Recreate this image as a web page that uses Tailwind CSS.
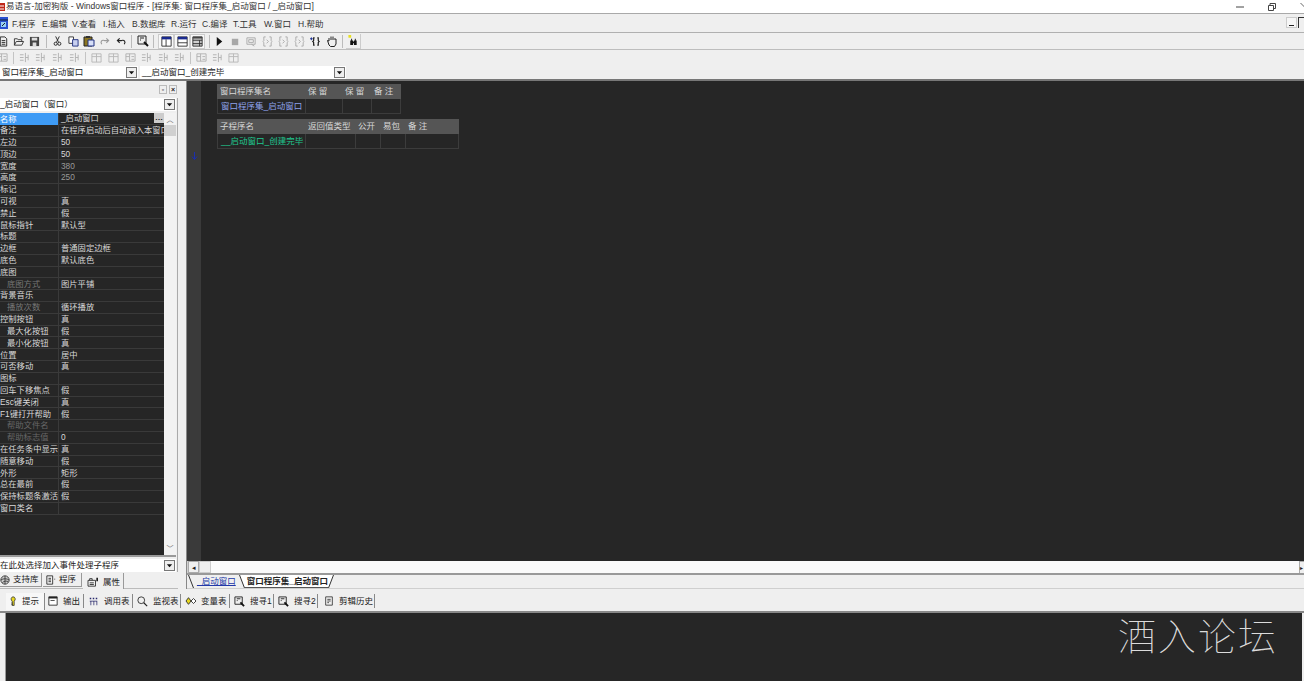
<!doctype html>
<html lang="zh-CN">

<head>
  <meta charset="UTF-8" />
  <title>易语言</title>
  <script src="https://cdn.jsdelivr.net/npm/@tailwindcss/browser@4"></script>
</head>

<body class="h-[681px] w-[1304px] overflow-hidden bg-[#efefef] text-[8.5px] leading-none text-[#222] font-['Liberation_Sans','Noto_Sans_CJK_SC',sans-serif]">
  <svg class="hidden">
    <symbol id="doc" viewBox="0 0 12 12"><path d="M2.500 1h5l2 2v8h-7zM4 5h4M4 7h4M4 9h4" fill="none" stroke="#222" /></symbol>
    <symbol id="open" viewBox="0 0 12 12"><path d="M1 10V3h3l1 1h4v2M1 10l2-4h8l-2 4zM8 1l2 1-1 1" fill="none" stroke="#333" /></symbol>
    <symbol id="save" viewBox="0 0 12 12"><path d="M1 1h10v10H1z" fill="#444" /><path d="M3 2h6v3H3zM4 7h4v4H4z" fill="#ddd" /></symbol>
    <symbol id="cut" viewBox="0 0 12 12"><path d="M4 1l3 6M8 1L5 7" fill="none" stroke="#222" /><circle cx="4" cy="9" r="1.700" fill="none" stroke="#222" /><circle cx="8" cy="9" r="1.700" fill="none" stroke="#222" /></symbol>
    <symbol id="copy" viewBox="0 0 12 12"><path d="M1 1h5v7H1z" fill="#fff" stroke="#333" /><path d="M5 4h6v7H5z" fill="#c8d0f0" stroke="#203080" /></symbol>
    <symbol id="paste" viewBox="0 0 12 12"><path d="M1 2h8v9H1z" fill="#8a7420" stroke="#222" /><path d="M3 1h4v2H3z" fill="#333" /><path d="M5 5h6v6H5z" fill="#d8e0f8" stroke="#203080" /></symbol>
    <symbol id="undo" viewBox="0 0 12 12"><path d="M9 9c2-3 0-5-3-4H2M4 2.500L1.500 5 4 7.500" fill="none" stroke="currentColor" stroke-width="1.200" /></symbol>
    <symbol id="find" viewBox="0 0 12 12"><path d="M1 1h8v8H1zM3 3h4M3 5h1" fill="none" stroke="#222" /><path d="M7 7l4 4" stroke="#111" stroke-width="2" /></symbol>
    <symbol id="panel1" viewBox="0 0 13 13"><path d="M1 1h11v11H1z" fill="#fff" stroke="#222" /><path d="M1 1h11v3H1z" fill="#1a2a90" /><path d="M6 4v8" stroke="#222" /></symbol>
    <symbol id="panel2" viewBox="0 0 13 13"><path d="M1 1h11v11H1z" fill="#fff" stroke="#222" /><path d="M1 1h11v3H1z" fill="#1a2a90" /><path d="M1 8h11" stroke="#222" /></symbol>
    <symbol id="panel3" viewBox="0 0 13 13"><path d="M1 1h11v11H1z" fill="#cfcfcf" stroke="#222" /><path d="M1 1h11v2H1z" fill="#444" /><path d="M1 5h11M1 9h11M9 5v7" stroke="#222" /></symbol>
    <symbol id="play" viewBox="0 0 12 12"><path d="M3 1l6 5-6 5z" fill="#111" /></symbol>
    <symbol id="stop" viewBox="0 0 12 12"><path d="M2 3h7v7H2z" fill="#a8a8a8" /></symbol>
    <symbol id="gbox" viewBox="0 0 12 12"><path d="M1 2h9v7H1zM3 4h5v3H3zM6 9l3 2" fill="none" stroke="#a8a8a8" /></symbol>
    <symbol id="brace" viewBox="0 0 12 12"><path d="M4 1H2v4L1 6l1 1v4h2M8 1h2v4l1 1-1 1v4H8M5 4l2 2-2 2" fill="none" stroke="#a8a8a8" /></symbol>
    <symbol id="brace2" viewBox="0 0 12 12"><path d="M5 2H4v3L3 6l1 1v3h1M8 2h1v3l1 1-1 1v3H8" fill="none" stroke="#111" stroke-width="1.200" /><path d="M0 3h3M1.500 1.500v3" stroke="#142a90" /></symbol>
    <symbol id="hand" viewBox="0 0 12 12"><path d="M3 6V3m2 2V1.500m2 3.500V1.500M9 5V3m-6 3L1.500 5.500 3 10l1.500 1.500h4L10 9V4" fill="none" stroke="#222" /></symbol>
    <symbol id="bino" viewBox="0 0 12 12"><path d="M1 0h3v3H1z" fill="#e8e020" /><path d="M3 6h3v5H3zM7 6h3v5H7zM4 4h1v2H4zM8 4h1v2H8zM6 7h1v2H6z" fill="#111" /></symbol>
    <symbol id="g1" viewBox="0 0 12 12"><path d="M1 2h10v8H1zM5 2v8M1 5h4M7 5h3M7 8h3" fill="none" stroke="#b0b0b0" /></symbol>
    <symbol id="g2" viewBox="0 0 12 12"><path d="M1 3h4M1 6h4M1 9h4M7 1v10M10 3v6M7 6h3" fill="none" stroke="#b0b0b0" /></symbol>
    <symbol id="g3" viewBox="0 0 12 12"><path d="M1 2h10v9H1zM1 5h10M6 2v9" fill="none" stroke="#b8b8b8" /></symbol>
    <symbol id="hint" viewBox="0 0 10 14"><path d="M5 1a3 3 0 0 1 1.500 5.500V12H4V6.500A3 3 0 0 1 5 1z" fill="#e8d820" stroke="#333" /><path d="M3 9h2M3 11h2" stroke="#333" /></symbol>
    <symbol id="output" viewBox="0 0 12 12"><path d="M1 1h10v10H1z" fill="#fff" stroke="#222" /><path d="M1 1h10v2H1zM3 5h5v1H3z" fill="#222" /></symbol>
    <symbol id="calls" viewBox="0 0 12 12"><path d="M1 1h2v2H1zM5 1h2v2H5zM9 1h2v2H9zM1 5h10v1H1zM2 6h1v5H2zM6 6h1v5H6zM10 6h1v5h-1z" fill="#28286c" /></symbol>
    <symbol id="lens" viewBox="0 0 13 13"><circle cx="5" cy="5" r="4" fill="none" stroke="#222" /><path d="M8 8l4 4" stroke="#222" stroke-width="1.400" /></symbol>
    <symbol id="vars" viewBox="0 0 14 12"><path d="M4 2l3 4-3 4-3-4z" fill="#e8d820" stroke="#222" /><path d="M10 3l3 3-3 3-3-3z" fill="#fff" stroke="#222" /></symbol>
    <symbol id="clip" viewBox="0 0 12 12"><path d="M2 1h8v10H2zM4 4h4M4 6h4M4 8h2" fill="none" stroke="#333" /></symbol>
    <symbol id="lib" viewBox="0 0 12 12"><circle cx="6" cy="6" r="5" fill="#ccc" stroke="#333" /><path d="M1 6c3-2 7-2 10 0M3 9c2-2 5-2 7-1M6 1v10" fill="none" stroke="#333" /></symbol>
    <symbol id="prog" viewBox="0 0 12 12"><path d="M1 1h7v10H1zM3 4h3M3 6h3M3 8h3M10 5h1" fill="none" stroke="#222" /></symbol>
    <symbol id="attr" viewBox="0 0 14 12"><path d="M1 4h9v7H1zM3 4V2h3v2M3 7h5M3 9h5" fill="none" stroke="#222" /><path d="M11 1h2v4h-2z" fill="#222" /></symbol>
    <symbol id="arrow" viewBox="0 0 8 8"><path d="M1 2.500h6L4 6z" fill="#111" /></symbol>
  </svg>

  <!-- Title bar -->
  <header class="flex h-[14px] items-center border-b border-[#a9a9a9] bg-white">
    <svg class="mr-[1px] h-[10px] w-[5px] shrink-0" viewBox="0 0 5 10"><path d="M0 1h5v8H0z" fill="#c02818" /><path d="M0 4h4M0 7h4" stroke="#fff" /></svg>
    <span class="whitespace-nowrap text-[8.500px] text-[#333]">易语言-加密狗版 - Windows窗口程序 - [程序集: 窗口程序集_启动窗口 / _启动窗口]</span>
    <div class="ml-auto flex items-center gap-[24px]">
      <svg class="h-[10px] w-[8px]" viewBox="0 0 8 10"><path d="M0 5h8" stroke="#444" /></svg>
      <svg class="h-[10px] w-[8px]" viewBox="0 0 8 10"><path d="M.5 3.500h5v5h-5zM2 3.500V1.500h5.500v5H5.500" fill="none" stroke="#444" /></svg>
      <svg class="h-[10px] w-[4px]" viewBox="0 0 4 10"><path d="M.5 1l5 5" stroke="#666" /></svg>
    </div>
  </header>

  <!-- Menu bar -->
  <nav class="flex h-[19px] items-center border-b border-[#b0b0b0] text-[8.500px] text-[#333]">
    <svg class="h-[14px] w-[8px] shrink-0" viewBox="0 0 8 14"><path d="M0 1h8v12H0z" fill="#2a50d0" /><path d="M0 4h8" stroke="#123" /><path d="M1 6h5v5H1z" fill="#9ad0f0" /><path d="M2 10l3-3" stroke="#123" /></svg>
    <div class="ml-[4px] flex gap-[7px] whitespace-nowrap pt-[3px]">
      <span class="w-[23px]">F.程序</span><span class="w-[23px]">E.编辑</span><span class="w-[24px]">V.查看</span><span class="w-[22px]">I.插入</span><span class="w-[32px]">B.数据库</span><span class="w-[24px]">R.运行</span><span class="w-[24px]">C.编译</span><span class="w-[24px]">T.工具</span><span class="w-[27px]">W.窗口</span><span class="w-[25px]">H.帮助</span>
    </div>
    <div class="ml-auto flex h-[12px] gap-[1px]">
      <span class="flex h-[11px] w-[11px] items-end justify-center border border-[#ccc] bg-[#f6f6f6] pb-px"><span class="h-px w-[5px] bg-[#222]"></span></span>
      <span class="h-[11px] w-[6px] border-l border-t border-[#333]"></span>
    </div>
  </nav>

  <!-- Main toolbar -->
  <div class="flex h-[16px] items-center text-[#9a9a9a]">
    <svg class="-ml-[2px] h-[11px] w-[11px]"><use href="#doc" /></svg>
    <svg class="ml-[4px] h-[11px] w-[12px]"><use href="#open" /></svg>
    <svg class="ml-[4px] h-[11px] w-[11px]"><use href="#save" /></svg>
    <span class="ml-[6px] h-[13px] border-l border-[#bbb]"></span>
    <svg class="ml-[5px] h-[12px] w-[11px]"><use href="#cut" /></svg>
    <svg class="ml-[5px] h-[11px] w-[11px]"><use href="#copy" /></svg>
    <svg class="ml-[4px] h-[12px] w-[12px]"><use href="#paste" /></svg>
    <svg class="ml-[4px] h-[11px] w-[11px] -scale-x-100"><use href="#undo" /></svg>
    <svg class="ml-[6px] h-[11px] w-[11px] text-[#222]"><use href="#undo" /></svg>
    <span class="ml-[4px] h-[13px] border-l border-[#bbb]"></span>
    <svg class="ml-[5px] h-[12px] w-[12px]"><use href="#find" /></svg>
    <span class="ml-[4px] h-[13px] border-l border-[#bbb]"></span>
    <span class="ml-[4px] flex h-[15px] w-[16px] items-center justify-center border border-[#ccc] bg-[#f8f8f8]"><svg class="h-[11px] w-[11px]"><use href="#panel1" /></svg></span>
    <span class="flex h-[15px] w-[16px] items-center justify-center border border-[#ccc] bg-[#f8f8f8]"><svg class="h-[11px] w-[11px]"><use href="#panel2" /></svg></span>
    <span class="flex h-[15px] w-[15px] items-center justify-center border border-[#ccc] bg-[#f8f8f8]"><svg class="h-[11px] w-[11px]"><use href="#panel3" /></svg></span>
    <span class="ml-[4px] h-[13px] border-l border-[#bbb]"></span>
    <svg class="ml-[4px] h-[11px] w-[11px]"><use href="#play" /></svg>
    <svg class="ml-[5px] h-[11px] w-[11px]"><use href="#stop" /></svg>
    <svg class="ml-[5px] h-[11px] w-[11px]"><use href="#gbox" /></svg>
    <svg class="ml-[5px] h-[11px] w-[11px]"><use href="#brace" /></svg>
    <svg class="ml-[5px] h-[11px] w-[11px]"><use href="#brace" /></svg>
    <svg class="ml-[5px] h-[11px] w-[11px]"><use href="#brace" /></svg>
    <svg class="ml-[5px] h-[11px] w-[11px]"><use href="#brace2" /></svg>
    <svg class="ml-[5px] h-[12px] w-[12px]"><use href="#hand" /></svg>
    <span class="ml-[4px] h-[13px] border-l border-[#bbb]"></span>
    <span class="ml-[3px] flex h-[15px] w-[15px] items-center justify-center border-r border-b border-[#ccc]"><svg class="h-[11px] w-[12px]"><use href="#bino" /></svg></span>
  </div>

  <!-- Align toolbar, greyed out -->
  <div class="flex h-[16px] items-center border-t border-[#bdbdbd]">
    <svg class="-ml-[3px] h-[11px] w-[11px]"><use href="#g1" /></svg>
    <span class="ml-[5px] h-[12px] border-l border-[#c4c4c4]"></span>
    <svg class="ml-[5px] h-[11px] w-[11px]"><use href="#g2" /></svg>
    <svg class="ml-[5px] h-[11px] w-[11px]"><use href="#g2" /></svg>
    <svg class="ml-[6px] h-[11px] w-[11px]"><use href="#g2" /></svg>
    <svg class="ml-[6px] h-[11px] w-[11px]"><use href="#g2" /></svg>
    <span class="ml-[5px] h-[12px] border-l border-[#c4c4c4]"></span>
    <svg class="ml-[5px] h-[11px] w-[11px]"><use href="#g3" /></svg>
    <svg class="ml-[6px] h-[11px] w-[11px]"><use href="#g3" /></svg>
    <svg class="ml-[6px] h-[11px] w-[11px]"><use href="#g1" /></svg>
    <svg class="ml-[5px] h-[11px] w-[11px]"><use href="#g2" /></svg>
    <svg class="ml-[6px] h-[11px] w-[11px]"><use href="#g2" /></svg>
    <svg class="ml-[5px] h-[11px] w-[11px]"><use href="#g2" /></svg>
    <span class="ml-[5px] h-[12px] border-l border-[#c4c4c4]"></span>
    <svg class="ml-[5px] h-[11px] w-[11px]"><use href="#g1" /></svg>
    <svg class="ml-[5px] h-[11px] w-[11px]"><use href="#g2" /></svg>
    <svg class="ml-[5px] h-[11px] w-[11px]"><use href="#g3" /></svg>
  </div>

  <!-- Combo boxes -->
  <div class="flex h-[16px] items-center gap-[2px] border-b-2 border-[#777]">
    <div class="flex h-[13px] w-[138px] items-center justify-between bg-white pl-[2px] pr-px">
      <span>窗口程序集_启动窗口</span>
      <span class="flex h-[11px] w-[11px] items-center justify-center border border-[#777] bg-[#efefef]"><svg class="h-[7px] w-[7px]"><use href="#arrow" /></svg></span>
    </div>
    <div class="flex h-[13px] w-[206px] items-center justify-between bg-white pl-[2px] pr-px">
      <span>__启动窗口_创建完毕</span>
      <span class="flex h-[11px] w-[11px] items-center justify-center border border-[#777] bg-[#efefef]"><svg class="h-[7px] w-[7px]"><use href="#arrow" /></svg></span>
    </div>
  </div>

  <div class="flex h-[508px]">
    <!-- Property panel -->
    <aside class="flex w-[186px] shrink-0 flex-col">
      <div class="flex h-[17px] w-[178px] items-center justify-end gap-[2px] pr-px">
        <span class="flex h-[9px] w-[8px] items-center justify-center border border-[#bbb] text-[7px] font-bold">▫</span>
        <span class="flex h-[9px] w-[8px] items-center justify-center border border-[#bbb] text-[7px] font-bold">×</span>
      </div>
      <div class="w-[178px] border-r border-[#aaa]">
        <div class="flex h-[13px] w-[176px] items-center justify-between bg-white pr-px">
          <span class="whitespace-nowrap">_启动窗口（窗口）</span>
          <span class="flex h-[11px] w-[11px] items-center justify-center border border-[#777] bg-[#efefef]"><svg class="h-[7px] w-[7px]"><use href="#arrow" /></svg></span>
        </div>

        <div class="mt-[2px] flex h-[444px] w-[176px] border-b-2 border-[#999]">
          <div class="h-full w-[164px] overflow-hidden bg-[#262626] text-[8.300px] text-[#d8d8d8]">
            <div class="grid grid-cols-[58px_106px] grid-rows-[repeat(34,11.82px)]">
              <span class="flex items-center overflow-hidden whitespace-nowrap bg-[#3e9bf5] text-white">名称</span><span class="flex items-center justify-between whitespace-nowrap border-b border-l border-[#3a3a3a] pl-[2px]">_启动窗口<span class="flex h-[10px] w-[10px] items-center justify-center bg-[#ccc] text-[8px] font-bold text-[#222]">…</span></span>
              <span class="flex items-center whitespace-nowrap border-b border-[#3a3a3a]">备注</span><span class="flex items-center overflow-hidden whitespace-nowrap border-b border-l border-[#3a3a3a] pl-[2px]">在程序启动后自动调入本窗口</span>
              <span class="flex items-center whitespace-nowrap border-b border-[#3a3a3a]">左边</span><span class="flex items-center whitespace-nowrap border-b border-l border-[#3a3a3a] pl-[2px]">50</span>
              <span class="flex items-center whitespace-nowrap border-b border-[#3a3a3a]">顶边</span><span class="flex items-center whitespace-nowrap border-b border-l border-[#3a3a3a] pl-[2px]">50</span>
              <span class="flex items-center whitespace-nowrap border-b border-[#3a3a3a]">宽度</span><span class="flex items-center whitespace-nowrap border-b border-l border-[#3a3a3a] pl-[2px] text-[#999]">380</span>
              <span class="flex items-center whitespace-nowrap border-b border-[#3a3a3a]">高度</span><span class="flex items-center whitespace-nowrap border-b border-l border-[#3a3a3a] pl-[2px] text-[#999]">250</span>
              <span class="flex items-center whitespace-nowrap border-b border-[#3a3a3a]">标记</span><span class="flex items-center whitespace-nowrap border-b border-l border-[#3a3a3a] pl-[2px]"></span>
              <span class="flex items-center whitespace-nowrap border-b border-[#3a3a3a]">可视</span><span class="flex items-center whitespace-nowrap border-b border-l border-[#3a3a3a] pl-[2px]">真</span>
              <span class="flex items-center whitespace-nowrap border-b border-[#3a3a3a]">禁止</span><span class="flex items-center whitespace-nowrap border-b border-l border-[#3a3a3a] pl-[2px]">假</span>
              <span class="flex items-center whitespace-nowrap border-b border-[#3a3a3a]">鼠标指针</span><span class="flex items-center whitespace-nowrap border-b border-l border-[#3a3a3a] pl-[2px]">默认型</span>
              <span class="flex items-center whitespace-nowrap border-b border-[#3a3a3a]">标题</span><span class="flex items-center whitespace-nowrap border-b border-l border-[#3a3a3a] pl-[2px]"></span>
              <span class="flex items-center whitespace-nowrap border-b border-[#3a3a3a]">边框</span><span class="flex items-center whitespace-nowrap border-b border-l border-[#3a3a3a] pl-[2px]">普通固定边框</span>
              <span class="flex items-center whitespace-nowrap border-b border-[#3a3a3a]">底色</span><span class="flex items-center whitespace-nowrap border-b border-l border-[#3a3a3a] pl-[2px]">默认底色</span>
              <span class="flex items-center whitespace-nowrap border-b border-[#3a3a3a]">底图</span><span class="flex items-center whitespace-nowrap border-b border-l border-[#3a3a3a] pl-[2px]"></span>
              <span class="flex items-center whitespace-nowrap border-b border-[#3a3a3a] pl-[7px] text-[#777]">底图方式</span><span class="flex items-center whitespace-nowrap border-b border-l border-[#3a3a3a] pl-[2px]">图片平铺</span>
              <span class="flex items-center whitespace-nowrap border-b border-[#3a3a3a]">背景音乐</span><span class="flex items-center whitespace-nowrap border-b border-l border-[#3a3a3a] pl-[2px]"></span>
              <span class="flex items-center whitespace-nowrap border-b border-[#3a3a3a] pl-[7px] text-[#777]">播放次数</span><span class="flex items-center whitespace-nowrap border-b border-l border-[#3a3a3a] pl-[2px]">循环播放</span>
              <span class="flex items-center whitespace-nowrap border-b border-[#3a3a3a]">控制按钮</span><span class="flex items-center whitespace-nowrap border-b border-l border-[#3a3a3a] pl-[2px]">真</span>
              <span class="flex items-center whitespace-nowrap border-b border-[#3a3a3a] pl-[7px]">最大化按钮</span><span class="flex items-center whitespace-nowrap border-b border-l border-[#3a3a3a] pl-[2px]">假</span>
              <span class="flex items-center whitespace-nowrap border-b border-[#3a3a3a] pl-[7px]">最小化按钮</span><span class="flex items-center whitespace-nowrap border-b border-l border-[#3a3a3a] pl-[2px]">真</span>
              <span class="flex items-center whitespace-nowrap border-b border-[#3a3a3a]">位置</span><span class="flex items-center whitespace-nowrap border-b border-l border-[#3a3a3a] pl-[2px]">居中</span>
              <span class="flex items-center whitespace-nowrap border-b border-[#3a3a3a]">可否移动</span><span class="flex items-center whitespace-nowrap border-b border-l border-[#3a3a3a] pl-[2px]">真</span>
              <span class="flex items-center whitespace-nowrap border-b border-[#3a3a3a]">图标</span><span class="flex items-center whitespace-nowrap border-b border-l border-[#3a3a3a] pl-[2px]"></span>
              <span class="flex items-center whitespace-nowrap border-b border-[#3a3a3a]">回车下移焦点</span><span class="flex items-center whitespace-nowrap border-b border-l border-[#3a3a3a] pl-[2px]">假</span>
              <span class="flex items-center whitespace-nowrap border-b border-[#3a3a3a]">Esc键关闭</span><span class="flex items-center whitespace-nowrap border-b border-l border-[#3a3a3a] pl-[2px]">真</span>
              <span class="flex items-center whitespace-nowrap border-b border-[#3a3a3a]">F1键打开帮助</span><span class="flex items-center whitespace-nowrap border-b border-l border-[#3a3a3a] pl-[2px]">假</span>
              <span class="flex items-center whitespace-nowrap border-b border-[#3a3a3a] pl-[7px] text-[#666]">帮助文件名</span><span class="flex items-center whitespace-nowrap border-b border-l border-[#3a3a3a] pl-[2px]"></span>
              <span class="flex items-center whitespace-nowrap border-b border-[#3a3a3a] pl-[7px] text-[#666]">帮助标志值</span><span class="flex items-center whitespace-nowrap border-b border-l border-[#3a3a3a] pl-[2px]">0</span>
              <span class="flex items-center whitespace-nowrap border-b border-[#3a3a3a]">在任务条中显示</span><span class="flex items-center whitespace-nowrap border-b border-l border-[#3a3a3a] pl-[2px]">真</span>
              <span class="flex items-center whitespace-nowrap border-b border-[#3a3a3a]">随意移动</span><span class="flex items-center whitespace-nowrap border-b border-l border-[#3a3a3a] pl-[2px]">假</span>
              <span class="flex items-center whitespace-nowrap border-b border-[#3a3a3a]">外形</span><span class="flex items-center whitespace-nowrap border-b border-l border-[#3a3a3a] pl-[2px]">矩形</span>
              <span class="flex items-center whitespace-nowrap border-b border-[#3a3a3a]">总在最前</span><span class="flex items-center whitespace-nowrap border-b border-l border-[#3a3a3a] pl-[2px]">假</span>
              <span class="flex items-center whitespace-nowrap border-b border-[#3a3a3a]">保持标题条激活</span><span class="flex items-center whitespace-nowrap border-b border-l border-[#3a3a3a] pl-[2px]">假</span>
              <span class="flex items-center whitespace-nowrap border-b border-[#3a3a3a]">窗口类名</span><span class="flex items-center whitespace-nowrap border-b border-l border-[#3a3a3a] pl-[2px]"></span>
            </div>
          </div>
          <div class="flex w-[12px] flex-col items-center justify-between bg-[#f2f2f2] pb-[3px] text-[7px] text-[#666]">
            <span class="flex w-full flex-col items-center"><span class="h-[12px] pt-[3px]">︿</span><span class="h-[11px] w-full bg-[#d0d0d0]"></span></span>
            <span>﹀</span>
          </div>
        </div>

        <div class="mt-[2px] flex h-[13px] w-[176px] items-center justify-between bg-white pr-px">
          <span class="whitespace-nowrap">在此处选择加入事件处理子程序</span>
          <span class="flex h-[11px] w-[11px] items-center justify-center border border-[#777] bg-[#efefef]"><svg class="h-[7px] w-[7px]"><use href="#arrow" /></svg></span>
        </div>
      </div>

      <div class="mt-px flex h-[16px] w-[178px] items-start border-b border-[#bbb]">
        <span class="flex h-[14px] w-[42px] items-center gap-[3px] border-r border-b border-[#999]"><svg class="h-[10px] w-[10px]"><use href="#lib" /></svg>支持库</span>
        <span class="ml-px flex h-[14px] w-[39px] items-center gap-[3px] border-r border-b border-[#999] pl-[3px]"><svg class="h-[10px] w-[10px]"><use href="#prog" /></svg>程序</span>
        <span class="ml-px flex h-[16px] w-[41px] items-center gap-[4px] border-r border-[#999] bg-[#efefef] pl-[4px] pt-[2px]"><svg class="h-[10px] w-[12px]"><use href="#attr" /></svg>属性</span>
      </div>
    </aside>

    <!-- Code editor -->
    <section class="flex min-w-0 flex-1 flex-col border-l border-[#888]">
      <div class="flex h-[480px] bg-[#262626]">
        <div class="flex w-[14px] shrink-0 justify-center bg-[#3a3a3a] pt-[71px]">
          <svg class="h-[8px] w-[7px]" viewBox="0 0 7 8"><path d="M3.500 0v7M1 4.500l2.500 3 2.500-3" fill="none" stroke="#1b2fb0" /></svg>
        </div>
        <div class="flex flex-col gap-[5px] pl-[16px] pt-[3px]">
          <div class="grid w-[184px] grid-cols-[88px_37px_29px_30px] grid-rows-[15px_14px] border-b border-[#3c3c3c] text-[#d8d8d8]">
            <span class="flex items-center whitespace-nowrap bg-[#555] pl-[3px]">窗口程序集名</span><span class="flex items-center whitespace-nowrap bg-[#555] pl-[3px]">保 留</span><span class="flex items-center whitespace-nowrap bg-[#555] pl-[3px]">保 留</span><span class="flex items-center whitespace-nowrap bg-[#555] pl-[3px]">备 注</span>
            <span class="flex items-center whitespace-nowrap border-l border-[#3c3c3c] pl-[3px] text-[#8ea2ea]">窗口程序集_启动窗口</span><span class="border-l border-[#3c3c3c]"></span><span class="border-l border-[#3c3c3c]"></span><span class="border-x border-[#3c3c3c]"></span>
          </div>
          <div class="grid w-[242px] grid-cols-[88px_50px_25px_25px_54px] grid-rows-[15px_14px] border-b border-[#3c3c3c] text-[#d8d8d8]">
            <span class="flex items-center whitespace-nowrap bg-[#555] pl-[3px]">子程序名</span><span class="flex items-center whitespace-nowrap bg-[#555] pl-[3px]">返回值类型</span><span class="flex items-center whitespace-nowrap bg-[#555] pl-[3px]">公开</span><span class="flex items-center whitespace-nowrap bg-[#555] pl-[3px]">易包</span><span class="flex items-center whitespace-nowrap bg-[#555] pl-[3px]">备 注</span>
            <span class="flex items-center whitespace-nowrap border-l border-[#3c3c3c] pl-[3px] text-[#20c890]">__启动窗口_创建完毕</span><span class="border-l border-[#3c3c3c]"></span><span class="border-l border-[#3c3c3c]"></span><span class="border-l border-[#3c3c3c]"></span><span class="border-x border-[#3c3c3c]"></span>
          </div>
        </div>
      </div>

      <!-- Horizontal scrollbar -->
      <div class="flex h-[14px] items-stretch border-b-2 border-[#999] bg-[#fafafa]">
        <span class="w-[1px] bg-[#d0d0d0]"></span>
        <span class="flex w-[11px] items-center justify-center border border-[#aaa] bg-[#efefef] text-[7px]">◂</span>
        <span class="w-[12px] border border-[#ccc] bg-[#efefef]"></span>
        <span class="ml-auto flex w-[5px] items-center border-l border-t border-[#aaa] bg-[#efefef] text-[6px]">▸</span>
      </div>

      <!-- Editor tabs -->
      <div class="flex h-[14px] items-start border-b border-[#cfcfcf] pl-[1px]">
        <svg class="h-[13px] w-[6px] shrink-0" viewBox="0 0 6 13"><path d="M.5 0l5 13" stroke="#333" fill="none" /></svg>
        <span class="whitespace-nowrap pl-[3px] pt-[2px] text-[#2238a8] underline">_启动窗口</span>
        <svg class="ml-[3px] h-[13px] w-[6px] shrink-0" viewBox="0 0 6 13"><path d="M0 0h6v13z" fill="#fff" /><path d="M.5 0l5 13" stroke="#333" fill="none" /></svg>
        <span class="h-[13px] whitespace-nowrap border-b border-[#555] bg-white pl-[2px] pt-[2px] font-bold">窗口程序集_启动窗口</span>
        <svg class="h-[13px] w-[6px] shrink-0" viewBox="0 0 6 13"><path d="M0 0h6L0 13z" fill="#fff" /><path d="M5.500 0L.5 13" stroke="#333" fill="none" /></svg>
      </div>
    </section>
  </div>

  <!-- Output tabs -->
  <div class="flex h-[24px] items-center border-b-2 border-[#888] pl-[6px] pt-[2px]">
    <span class="flex h-[17px] w-[39px] items-center gap-[5px] whitespace-nowrap border-r border-[#888] bg-[#f7f7f7] pl-[3px]"><svg class="h-[11px] w-[8px]"><use href="#hint" /></svg>提示</span>
    <span class="flex h-[14px] w-[39px] items-center gap-[5px] whitespace-nowrap border-r border-[#888] pl-[3px]"><svg class="h-[10px] w-[10px]"><use href="#output" /></svg>输出</span>
    <span class="flex h-[14px] w-[49px] items-center gap-[6px] whitespace-nowrap border-r border-[#888] pl-[5px]"><svg class="h-[9px] w-[9px]"><use href="#calls" /></svg>调用表</span>
    <span class="flex h-[14px] w-[48px] items-center gap-[5px] whitespace-nowrap border-r border-[#888] pl-[4px]"><svg class="h-[11px] w-[11px]"><use href="#lens" /></svg>监视表</span>
    <span class="flex h-[14px] w-[49px] items-center gap-[4px] whitespace-nowrap border-r border-[#888] pl-[4px]"><svg class="h-[10px] w-[12px]"><use href="#vars" /></svg>变量表</span>
    <span class="flex h-[14px] w-[44px] items-center gap-[5px] whitespace-nowrap border-r border-[#888] pl-[4px]"><svg class="h-[11px] w-[11px]"><use href="#find" /></svg>搜寻1</span>
    <span class="flex h-[14px] w-[44px] items-center gap-[5px] whitespace-nowrap border-r border-[#888] pl-[4px]"><svg class="h-[11px] w-[11px]"><use href="#find" /></svg>搜寻2</span>
    <span class="flex h-[14px] w-[57px] items-center gap-[5px] whitespace-nowrap border-r border-[#888] pl-[6px]"><svg class="h-[10px] w-[10px]"><use href="#clip" /></svg>剪辑历史</span>
  </div>

  <!-- Output panel -->
  <div class="ml-[5px] mr-[2px] flex h-[68px] justify-end border-l border-[#999] bg-[#262626] pr-[24px]">
    <span class="text-[38px] font-thin leading-[42px] tracking-[2px] text-[#dcdcdc] font-['Noto_Sans_CJK_SC',sans-serif]">酒入论坛</span>
  </div>
</body>

</html>
